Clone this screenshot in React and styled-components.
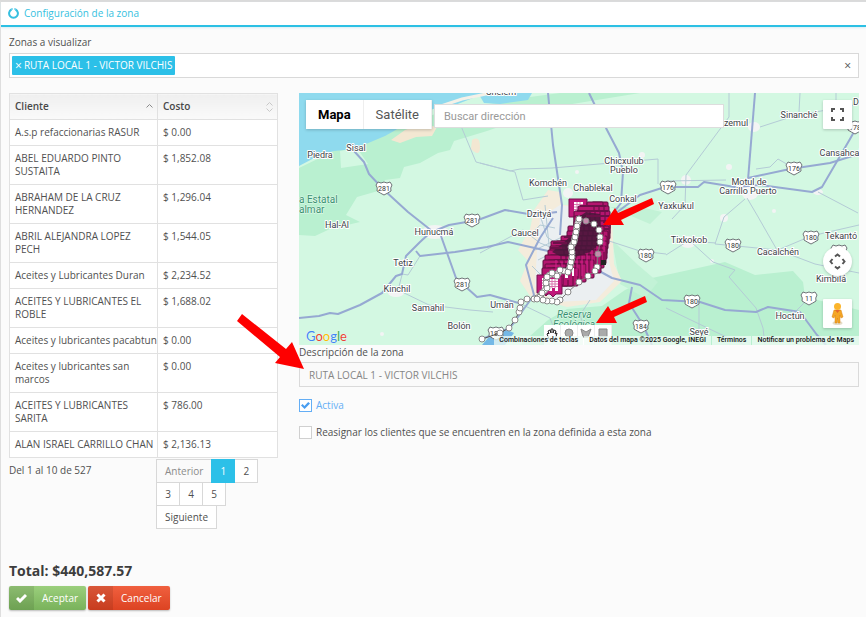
import React, { useState } from "react";
import styled, { createGlobalStyle, css } from "styled-components";

const GlobalStyle = createGlobalStyle`
  *, *::before, *::after { box-sizing: border-box; }
  body {
    margin: 0;
    background: #fbfbfb;
    color: #505050;
    font: 10px/13px "Open Sans", sans-serif;
  }
  button, input { font: inherit; color: inherit; }
`;

const Panel = styled.div`
  border-top: 2px solid #dadada;
  border-left: 1px solid #dedede;
  min-height: 100vh;
`;

const Header = styled.header`
  display: flex;
  align-items: center;
  gap: 5px;
  height: 25px;
  padding: 0 7px;
  background: #fff;
  border-bottom: 2px solid #2cc0e4;
  box-shadow: 0 1px 2px #d8eef4;
  color: #36bfe0;

  h1 { margin: 0; font-size: 10px; font-weight: 400; }
`;

const Body = styled.main`
  padding: 9px 7px 8px 8px;
`;

const Label = styled.label`
  display: block;
`;

const TagBox = styled.div`
  display: flex;
  align-items: center;
  justify-content: space-between;
  height: 25px;
  margin-top: 4px;
  padding: 0 7px 0 2px;
  background: #fff;
  border: 1px solid #d9d9d9;
`;

const Tag = styled.span`
  display: flex;
  align-items: center;
  gap: 2px;
  height: 19px;
  padding: 0 3px;
  border-radius: 1px;
  background: #2cc0e8;
  color: #fff;
`;

const PlainButton = styled.button`
  display: inline-flex;
  align-items: center;
  padding: 0;
  border: 0;
  background: none;
  font-size: 12px;
  cursor: pointer;
`;

const Columns = styled.div`
  display: grid;
  grid-template-columns: 269fr 560fr;
  gap: 21px;
  align-items: start;
  margin-top: 15px;
`;

const Table = styled.table`
  width: 100%;
  table-layout: fixed;
  border-collapse: collapse;
  background: #fff;

  th, td {
    padding: 6px 0 6px 5px;
    border: 1px solid #e1e1e1;
    text-align: left;
    vertical-align: top;
  }
  th {
    background: linear-gradient(#efefef, #fafafa);
    font-weight: 600;
    color: #484848;
  }
  th:first-child { width: 148px; }
`;

const HeadCell = styled.div`
  display: flex;
  align-items: center;
  justify-content: space-between;
  height: 13px;
  margin-right: 4px;
`;

const TableFooter = styled.div`
  display: grid;
  grid-template-columns: 147px 1fr;
  margin-top: 1px;

  p { margin: 5px 0 0; }
`;

const Pager = styled.nav`
  display: flex;
  flex-wrap: wrap;
`;

const PageButton = styled.button`
  height: 24px;
  min-width: 24px;
  margin: 0 -1px -1px 0;
  padding: 0 8px;
  border: 1px solid #d8d8d8;
  background: #fff;
  cursor: pointer;
  &:disabled { color: #8b8b8b; background: #fafafa; }
  ${(p) => p.$active && css`
    background: #2cc0e8;
    border-color: #2cc0e8;
    color: #fff;
    z-index: 1;
  `}
`;

const Total = styled.h2`
  margin: 34px 0 6px;
  font-size: 14px;
  line-height: 18px;
  font-weight: 700;
  color: #3d3d3d;
`;

const Actions = styled.div`
  display: flex;
  gap: 2px;
`;

const ActionButton = styled.button`
  display: flex;
  align-items: center;
  height: 24px;
  padding: 0 8px 0 0;
  gap: 8px;
  border: 0;
  border-radius: 2px;
  overflow: hidden;
  color: #fff;
  background: ${(p) => (p.$danger
    ? "linear-gradient(#f0603f, #dc4322)"
    : "linear-gradient(#9bcf7c, #79b25b)")};
  box-shadow: 0 1px 2px #bbb;
  cursor: pointer;

  span {
    display: grid;
    place-items: center;
    align-self: stretch;
    width: 25px;
    background: #00000018;
  }
`;

const MapFrame = styled.section`
  position: relative;
  height: 252px;
  background: #d3f8e2;
`;

const MapDrawing = styled.svg`
  display: block;
  width: 100%;
  height: 252px;
  font-family: Roboto, sans-serif;
`;

const Overlay = styled.svg`
  position: absolute;
  z-index: 5;
  pointer-events: none;
  overflow: visible;
  top: ${(p) => p.$top}px;
  left: ${(p) => p.$left}px;
`;

const MapTop = styled.div`
  position: absolute;
  inset: 7px 7px auto 7px;
  display: flex;
  align-items: flex-start;
  font-family: Roboto, sans-serif;
`;

const MapType = styled.div`
  display: flex;
  height: 29px;
  background: #fff;
  box-shadow: 0 1px 3px #0003;
`;

const TypeButton = styled.button`
  padding: 0 12px;
  border: 0;
  border-right: 1px solid #eee;
  background: #fff;
  font-size: 13px;
  font-weight: ${(p) => (p.$active ? 700 : 400)};
  color: ${(p) => (p.$active ? "#000" : "#565656")};
`;

const Search = styled.input`
  flex: 0 1 290px;
  min-width: 0;
  height: 24px;
  margin: 4px auto 0 2px;
  padding: 0 9px;
  border: 1px solid #ddd;
  background: #fff;
  font-size: 11px;
  &::placeholder { color: #999; opacity: 1; }
`;

const MapButton = styled.button`
  display: grid;
  place-items: center;
  width: 29px;
  height: 29px;
  padding: 0;
  border: 0;
  border-radius: ${(p) => (p.$round ? "50%" : "1px")};
  background: #fff;
  box-shadow: 0 1px 3px #0003;
`;

const MapSide = styled.div`
  position: absolute;
  right: 7px;
  bottom: 17px;
  display: grid;
  gap: 23px;
`;

const DrawTools = styled.div`
  position: absolute;
  left: 245px;
  bottom: 0;
  display: flex;
  height: 20px;
`;

const Tool = styled.button`
  display: flex;
  justify-content: center;
  align-items: flex-start;
  width: 17px;
  padding: 3px 0 0;
  border: 0;
  border-right: 1px solid #eee;
  background: #fff;
`;

const Attribution = styled.div`
  position: absolute;
  right: 0;
  bottom: 0;
  display: flex;
  gap: 1px;
  font: 500 7px/9px Roboto, sans-serif;
  color: #111;

  > * {
    padding: 0 5px;
    background: #effbf4c0;
    color: inherit;
    text-decoration: none;
    white-space: nowrap;
  }
`;

const LinkButton = styled.button`
  border: 0;
  font: inherit;
`;

const GoogleMark = styled.a`
  position: absolute;
  left: 7px;
  bottom: 0;
  text-decoration: none;
  font: 400 13px/18px Lato, sans-serif;
  text-shadow: 0 0 1px #fff;
`;

const Letter = styled.span`
  color: ${(p) => p.$color};
`;

const Field = styled.div`
  position: relative;
  margin-top: 1px;
`;

const TextInput = styled.input`
  display: block;
  width: 100%;
  height: 25px;
  margin-top: 3px;
  padding: 0 9px;
  border: 1px solid #dadada;
  background: #fafafa;
  color: #858585;
`;

const Check = styled.label`
  display: flex;
  align-items: center;
  gap: 4px;
  margin-top: ${(p) => p.$gap}px;
  color: ${(p) => (p.$on ? "#64aef5" : "inherit")};

  input {
    appearance: none;
    display: grid;
    place-items: center;
    width: 13px;
    height: 13px;
    margin: 0;
    border: 1px solid #d0d0d0;
    background: #fff;
  }
  input:checked { border-color: #64aef5; }
  input:checked::before {
    content: "";
    width: 9px;
    height: 8px;
    background: #4a9ef0;
    clip-path: polygon(0 50%, 18% 32%, 38% 55%, 80% 5%, 100% 25%, 40% 95%);
  }
`;

const clients = [
  ["A.s.p refaccionarias RASUR", "0.00"],
  ["ABEL EDUARDO PINTO SUSTAITA", "1,852.08"],
  ["ABRAHAM DE LA CRUZ HERNANDEZ", "1,296.04"],
  ["ABRIL ALEJANDRA LOPEZ PECH", "1,544.05"],
  ["Aceites y Lubricantes Duran", "2,234.52"],
  ["ACEITES Y LUBRICANTES EL ROBLE", "1,688.02"],
  ["Aceites y lubricantes pacabtun", "0.00"],
  ["Aceites y lubricantes san marcos", "0.00"],
  ["ACEITES Y LUBRICANTES SARITA", "786.00"],
  ["ALAN ISRAEL CARRILLO CHAN", "2,136.13"],
];

const places = [
  [320, 158, "Piedra"], [356, 151, "Sisal"], [337, 228, "Hal-Al"],
  [434, 235, "Hunucmá"], [403, 266, "Tetiz"], [397, 292, "Kinchil"],
  [428, 311, "Samahil"], [459, 329, "Bolón"], [502, 308, "Umán"],
  [525, 236, "Caucel"], [539, 217, "Dzityá"], [548, 186, "Komchén"],
  [593, 191, "Chablekal"], [623, 202, "Conkal"], [624, 164, "Chicxulub"],
  [624, 173, "Pueblo"], [676, 209, "Yaxkukul"], [736, 126, "zemul"],
  [799, 118, "Sinanché"], [749, 185, "Motul de"], [748, 194, "Carrillo Puerto"],
  [842, 156, "Cansahcab"], [856, 105, "D"], [689, 243, "Tixkokob"],
  [778, 255, "Cacalchén"], [841, 239, "Tekantó"], [831, 282, "Kimbilá"],
  [790, 319, "Hoctún"], [699, 335, "Seyé"], [501, 95, "Chelem"],
];

const shields = [
  [384, 188, 281], [472, 220, 281], [462, 284, 281], [668, 187, 176],
  [794, 168, 176], [855, 127, 178], [646, 255, 180], [733, 245, 180],
  [811, 237, 180], [692, 301, 180], [641, 326, 184], [809, 298, 11],
  [839, 251, 80], [496, 333, 180],
];

const highways = [
  "M354 151 L364 162 L369 174 L384 190 L408 212 L432 231 L420 242 L406 256 L402 274 L396 276 L382 293 L360 305 L338 314 L330 313 L319 316 L299 318",
  "M432 232 L449 225 L478 220 L505 210 L534 215 L557 212",
  "M441 236 L456 278 L477 297 L490 295 L522 304",
  "M416 251 L420 256 L455 252 L487 247 L508 242 L548 251",
  "M548 93 L553 145 L562 205 L560 235",
  "M589 93 L606 128 L619 153 L623 172 L621 203 L608 220",
  "M755 93 L748 180",
  "M608 219 L640 195 L665 187 L698 187 L704 182 L735 187 L760 185 L812 192 L822 187 L850 139 L859 123",
  "M748 178 L790 169 L830 163 L859 154",
  "M590 266 L612 278 L640 285 L662 300 L700 302 L725 310 L756 312 L768 307 L800 312 L817 335 L826 345",
  "M632 287 L629 303 L643 325 L652 345",
  "M553 218 L540 238 L526 265 L534 295 L510 328 L482 339",
];

const streets = [
  "M461 126 L476 162 L510 171 L520 169 L552 168 L658 159 L658 184",
  "M480 163 L515 172 L523 200 L548 196",
  "M729 93 L729 117 L686 175 L685 205 L672 219",
  "M760 127 L794 116 L859 104", "M836 93 L836 118",
  "M800 93 L799 112", "M666 181 L726 180",
  "M756 169 L770 167 L778 159 L790 166",
  "M745 199 L724 217 L715 244 L747 247 L777 250 L757 215 L747 198",
  "M818 192 L858 213", "M778 250 L811 236 L859 225",
  "M778 250 L815 264 L859 273",
  "M666 255 L688 241 L716 243", "M690 241 L713 262 L735 270 L729 277 L756 308 L763 328 L765 345",
  "M809 298 L794 313", "M699 302 L699 331",
  "M402 274 L408 275 L420 256", "M402 275 L398 290 L429 305 L470 310 L493 312",
  "M480 253 L523 230 L540 243 L558 250", "M521 304 L550 318 L560 345",
  "M606 240 L640 251 L666 254", "M666 308 L720 334 L745 345",
  "M590 300 L580 315 L590 345", "M530 236 L540 225 L555 228",
  "M540 215 L547 237 L570 252", "M545 205 L550 255 L570 265",
  "M535 250 L560 238", "M538 260 L562 248", "M532 266 L548 282",
];

const route = [
  [482, 339], [500, 333], [509, 328], [515, 320], [519, 312], [520, 308],
  [521, 302], [527, 299], [534, 299], [540, 297], [542, 293], [547, 288],
  [546, 283], [547, 277], [552, 273], [557, 276], [560, 270], [568, 272],
  [570, 267], [571, 262], [572, 257], [572, 252], [571, 247], [574, 242],
  [575, 237], [576, 232], [577, 226], [579, 219],
];

const loop = [
  [579, 219], [586, 221], [594, 224], [599, 230], [600, 237], [600, 242],
  [598, 254], [597, 267], [595, 271], [588, 276], [579, 282],
  [568, 292], [560, 300], [557, 302], [552, 301], [547, 301],
  [543, 300], [537, 299],
];

/* extra vertices halfway along the crowded part of the route */
const between = route.slice(8, -1).map(([x, y], i) => {
  const [nx, ny] = route[i + 9];
  return [(x + nx) / 2, (y + ny) / 2];
});

/* rows of overlapping client markers: y, first x, last x */
const pinRows = [
  [202, 584, 592], [206, 578, 593], [211, 574, 594], [216, 572, 594],
  [221, 570, 594], [226, 568, 593], [231, 564, 592], [236, 557, 591],
  [241, 551, 591], [246, 548, 590], [250, 546, 588], [255, 544, 585],
  [260, 542, 578], [264, 542, 570], [268, 541, 562],
];

const pins = pinRows.flatMap(([y, from, to]) => {
  const row = [];
  for (let x = to; x >= from; x -= 5) row.push([x, y]);
  return row;
});

const Shield = ({ x, y, n }) => (
  <g transform={`translate(${x} ${y})`}>
    <path d="M-6 -6 Q-3 -4 0 -6 Q3 -4 6 -6 L8 -3 Q6 0 7 3 Q4 5 0 7 Q-4 5 -7 3 Q-6 0 -8 -3Z" fill="#fff" stroke="#6f7478" strokeWidth="1" />
    <text y="3" fontSize="7" textAnchor="middle" fill="#333">{n}</text>
  </g>
);

const Pin = ({ x, y }) => (
  <g transform={`translate(${x} ${y})`}>
    <path d="M0 0 H18 V18 H12 L9 21 L6 18 H0Z" fill="#c0177a" stroke="#74104c" strokeWidth="1" />
    <path d="M5 3 H14 V15 H11 V12 H8 V15 H5Z" fill="#fff" />
    <path d="M5 5.500H14M5 8H14M5 10.500H14M8 3V12M11 3V12" stroke="#d977b0" strokeWidth="1" />
  </g>
);

const MapPicture = () => (
  <MapDrawing viewBox="299 93 560 252" preserveAspectRatio="xMinYMin slice" role="img" aria-label="Mapa de la zona">
    <rect x="299" y="93" width="900" height="252" fill="#d3f8e2" />
    <path d="M299 168 L340 148 L390 132 L440 112 L490 104 L530 97 L560 93 L640 93 L560 106 L487 131 L454 141 L450 150 L438 153 L420 163 L404 167 L400 178 L385 180 L378 191 L357 197 L346 215 L360 222 L330 229 L315 236 L299 235Z" fill="#b9f0d0" />
    <path d="M340 151 L357 148 L368 164 L341 168Z" fill="#d3f8e2" />
    <path d="M299 93 H486 L455 105 L433 109 L410 122 L385 136 L354 149 L334 151 L318 156 L299 166Z" fill="#8fdaee" />
    <path d="M478 93 H532 L528 100 L500 104 L484 103Z" fill="#8fdaee" />
    <path d="M438 107 L462 99 L486 94 L505 93" fill="none" stroke="#f4f1e8" strokeWidth="3" />
    <path d="M391 140 L405 130 L421 124 L437 127 L432 136 L416 137 L400 143Z M472 140 Q480 135 480 147 Q480 158 471 149Z" fill="#f3e7d2" />
    <path d="M520 345 L548 320 L567 309 L602 306 L625 290 L652 278 L698 268 L725 262 L755 275 L793 271 L803 282 L805 297 L859 310 V345Z" fill="#b9f0d0" />
    <path d="M610 207 L650 224 L662 212 L640 207Z M612 240 L638 265 L658 282 L645 298 L620 284Z" fill="#c2f2d6" />
    <path d="M534 210 L548 190 L560 192 L563 205 L590 206 L612 215 L614 264 L622 281 L600 302 L567 307 L530 296 L520 281 L528 261 L518 250 L530 229Z" fill="#f4ecdc" />
    <path d="M540 218 L560 205 L590 210 L610 225 L609 262 L614 281 L596 300 L555 302 L535 286 L537 250Z" fill="#ebeff1" />
    <path d="M482 345 L488 338 L505 329 L514 333 L505 345Z" fill="#74b8e6" />
    <g fill="#f3f4f4">
      <ellipse cx="435" cy="232" rx="13" ry="7" /><ellipse cx="396" cy="293" rx="8" ry="4" />
      <ellipse cx="754" cy="127" rx="6" ry="5" /><ellipse cx="750" cy="191" rx="9" ry="9" />
      <ellipse cx="688" cy="242" rx="8" ry="6" /><ellipse cx="818" cy="192" rx="5" ry="3" />
      <circle cx="686" cy="180" r="5" /><circle cx="642" cy="155" r="3" /><circle cx="568" cy="193" r="5" />
      <circle cx="382" cy="334" r="2" /><circle cx="724" cy="218" r="4" /><circle cx="712" cy="261" r="2" />
      <circle cx="729" cy="167" r="3" /><circle cx="774" cy="211" r="2" /><circle cx="577" cy="172" r="2" />
    </g>
    <g fill="none" stroke="#b4cbd6" strokeWidth="1">
      {streets.map((d) => <path key={d} d={d} />)}
    </g>
    <g fill="none" stroke="#96a9d2" strokeWidth="2" strokeLinejoin="round">
      {highways.map((d) => <path key={d} d={d} />)}
    </g>
    {shields.map(([x, y, n]) => <Shield key={`${x}-${y}`} x={x} y={y} n={n} />)}
    <g fontSize="9" fill="#3c4247" stroke="#fff" strokeWidth="2" strokeLinejoin="round" paintOrder="stroke" textAnchor="middle">
      {places.map(([x, y, name]) => <text key={name} x={x} y={y}>{name}</text>)}
    </g>
    <g fontSize="10" fill="#399070" stroke="#e6fbef" strokeWidth="1" paintOrder="stroke">
      <text x="299" y="203">a Estatal</text>
      <text x="299" y="213">almar</text>
      <text x="557" y="318" fontStyle="italic">Reserva</text>
      <text x="553" y="328" fontStyle="italic">Ecológica</text>
    </g>
    <Pin x={569} y={199} />
    <g fill="#b5156f" stroke="#5d0e3f" strokeWidth="1">
      {pins.map(([x, y]) => <rect key={`${x}-${y}`} x={x} y={y} width="16" height="18" rx="1" />)}
    </g>
    <path d="M586 212 L600 214 L601 236 L598 246 L590 252 L575 257 L560 256 L552 252 L562 244 L573 234 L577 218Z" fill="#47183a" opacity=".85" />
    <path d="M580 206H606M577 211H608M586 216H609M603 222H609M604 229H609M564 237H574M553 243H567M550 248H562" stroke="#6b1048" strokeWidth="2" />
    <path d="M562 262V284M568 260V280M577 258V276M582 256V276M587 254V272M592 250V270M597 246V264M556 260V270M604 235V252" stroke="#d0208a" strokeWidth="1" />
    <path d="M565 270h3v8h-3zM572 268h2v8h-2z" fill="#fff" />
    <Pin x={537} y={275} />
    <Pin x={544} y={276} />
    <path d="M601 260h5v5h-5z" fill="#222" />
    <polyline points={route.join(" ")} fill="none" stroke="#555" strokeWidth="1" />
    <polyline points={loop.join(" ")} fill="none" stroke="#777" strokeWidth="1" />
    <g stroke="#8a8a8a" strokeWidth="1">
      {[...between, ...route, ...loop].map(([x, y], i) => (
        <circle key={i} cx={x} cy={y} r="3" fill={(x === 586 || x === 598) ? "#c58aac" : "#fff"} />
      ))}
    </g>
  </MapDrawing>
);

const Arrow = ({ top, left, width, height, d }) => (
  <Overlay $top={top} $left={left} width={width} height={height} aria-hidden="true">
    <path d={d} fill="#fe0000" />
  </Overlay>
);

const brand = [
  ["G", "#4285f4"], ["o", "#ea4335"], ["o", "#fbbc05"],
  ["g", "#4285f4"], ["l", "#34a853"], ["e", "#ea4335"],
];

export default function App() {
  const [page, setPage] = useState(1);
  const [active, setActive] = useState(true);
  const [reassign, setReassign] = useState(false);

  return (
    <>
      <GlobalStyle />
      <Panel>
        <Header>
          <svg width="11" height="11" viewBox="0 0 11 11" fill="none" stroke="currentColor" strokeWidth="2" aria-hidden="true">
            <path d="M3.500 1.500A4.400 4.400 0 1 0 7.500 1.500" />
            <path d="M3 1H5M6 1H8" strokeWidth="1" />
          </svg>
          <h1>Configuración de la zona</h1>
        </Header>
        <Body>
          <Label as="div" id="zones">Zonas a visualizar</Label>
          <TagBox role="group" aria-labelledby="zones">
            <Tag><PlainButton aria-label="Quitar zona">×</PlainButton>RUTA LOCAL 1 - VICTOR VILCHIS</Tag>
            <PlainButton aria-label="Limpiar">×</PlainButton>
          </TagBox>
          <Columns>
            <div>
              <Table>
                <thead>
                  <tr>
                    <th aria-sort="ascending">
                      <HeadCell>Cliente
                        <svg width="7" height="12" viewBox="0 0 7 12" fill="none" stroke="#8a8a8a"><path d="M0.5 6.5L3.5 3.5L6.5 6.5" /></svg>
                      </HeadCell>
                    </th>
                    <th>
                      <HeadCell>Costo
                        <svg width="7" height="12" viewBox="0 0 7 12" fill="none" stroke="#c8c8c8"><path d="M0.5 4.5L3.5 1.5L6.5 4.5M0.5 7.5L3.5 10.5L6.5 7.5" /></svg>
                      </HeadCell>
                    </th>
                  </tr>
                </thead>
                <tbody>
                  {clients.map(([name, cost]) => (
                    <tr key={name}><td>{name}</td><td>$ {cost}</td></tr>
                  ))}
                </tbody>
              </Table>
              <TableFooter>
                <p>Del 1 al 10 de 527</p>
                <Pager aria-label="Páginas">
                  <PageButton disabled={page === 1} onClick={() => setPage(page - 1)}>Anterior</PageButton>
                  {[1, 2, 3, 4, 5].map((n) => (
                    <PageButton key={n} $active={n === page} onClick={() => setPage(n)}>{n}</PageButton>
                  ))}
                  <PageButton disabled={page === 5} onClick={() => setPage(page + 1)}>Siguiente</PageButton>
                </Pager>
              </TableFooter>
              <Total>Total: $440,587.57</Total>
              <Actions>
                <ActionButton>
                  <span><svg width="11" height="10" viewBox="0 0 11 10"><path d="M1 5L4 8L10 2" fill="none" stroke="#fff" strokeWidth="3" /></svg></span>
                  Aceptar
                </ActionButton>
                <ActionButton $danger>
                  <span><svg width="10" height="10" viewBox="0 0 10 10"><path d="M1.5 1.5L8.5 8.5M8.5 1.5L1.5 8.5" stroke="#fff" strokeWidth="3" /></svg></span>
                  Cancelar
                </ActionButton>
              </Actions>
            </div>
            <div>
              <MapFrame>
                <MapPicture />
                <MapTop>
                  <MapType>
                    <TypeButton $active>Mapa</TypeButton>
                    <TypeButton>Satélite</TypeButton>
                  </MapType>
                  <Search aria-label="Buscar dirección" placeholder="Buscar dirección" />
                  <MapButton aria-label="Pantalla completa">
                    <svg width="13" height="13" viewBox="0 0 13 13" fill="none" stroke="#555" strokeWidth="2"><path d="M1 4V1H4M9 1H12V4M12 9V12H9M4 12H1V9" /></svg>
                  </MapButton>
                </MapTop>
                <MapSide>
                  <MapButton $round aria-label="Controles de cámara">
                    <svg width="17" height="17" viewBox="0 0 17 17" fill="none" stroke="#555" strokeWidth="2"><path d="M6 3.5L8.500 1.500L11 3.500M6 13.500L8.500 15.500L11 13.500M3.500 6L1.500 8.500L3.500 11M13.500 6L15.500 8.500L13.500 11" /></svg>
                  </MapButton>
                  <MapButton aria-label="Street View">
                    <svg width="15" height="24" viewBox="0 0 15 24">
                      <ellipse cx="7.5" cy="21" rx="5" ry="2" fill="#e5dcc8" />
                      <path d="M4 8H11L13 15L11 16L10 13V21H8L7.500 16L7 21H5V13L4 16L2 15Z" fill="#f5a623" stroke="#d98314" strokeWidth="0.500" />
                      <circle cx="7.5" cy="4.5" r="3.500" fill="#fbb42b" />
                      <path d="M5 8H10L7.500 11Z" fill="#e5672c" />
                    </svg>
                  </MapButton>
                </MapSide>
                <DrawTools>
                  <Tool aria-label="Mover">
                    <svg width="12" height="12" viewBox="0 0 12 12"><path d="M3 11L1 6L2 5L3 6L2 3L4 2L5 5L5 1H7L7 5L8 2L10 3L9 6L11 5L10 9L9 11Z" fill="#fff" stroke="#222" strokeWidth="1" /></svg>
                  </Tool>
                  <Tool aria-label="Círculo">
                    <svg width="10" height="10" viewBox="0 0 10 10"><circle cx="5" cy="5" r="4" fill="#aaa" stroke="#888" /></svg>
                  </Tool>
                  <Tool aria-label="Polígono">
                    <svg width="12" height="10" viewBox="0 0 12 10"><path d="M1 1L6 4L11 1L8 9L3 9Z" fill="#aaa" stroke="#888" /></svg>
                  </Tool>
                  <Tool aria-label="Rectángulo">
                    <svg width="10" height="10" viewBox="0 0 10 10"><path d="M1 1H9V9H1Z" fill="#aaa" stroke="#888" /></svg>
                  </Tool>
                </DrawTools>
                <GoogleMark href="#google" aria-label="Google">
                  {brand.map(([ch, color], i) => <Letter key={i} $color={color}>{ch}</Letter>)}
                </GoogleMark>
                <Attribution>
                  <LinkButton>Combinaciones de teclas</LinkButton>
                  <span>Datos del mapa ©2025 Google, INEGI</span>
                  <a href="#terminos">Términos</a>
                  <a href="#notificar">Notificar un problema de Maps</a>
                </Attribution>
                <Arrow top={104} left={304} width={52} height={30} d="M49 1L51 7L18 23L21 28L0 28L12 11L15 16Z" />
                <Arrow top={202} left={297} width={52} height={30} d="M49 1L51 7L18 22L21 28L0 28L12 11L15 16Z" />
              </MapFrame>
              <Field>
                <Label htmlFor="description">Descripción de la zona</Label>
                <TextInput id="description" readOnly value="RUTA LOCAL 1 - VICTOR VILCHIS" />
                <Arrow top={-32} left={-62} width={68} height={56} d="M5 0L0 7L43 43L38 49L67 55L55 28L49 35Z" />
              </Field>
              <Check $gap={12} $on={active}>
                <input type="checkbox" checked={active} onChange={(e) => setActive(e.target.checked)} />
                Activa
              </Check>
              <Check $gap={14} $on={reassign}>
                <input type="checkbox" checked={reassign} onChange={(e) => setReassign(e.target.checked)} />
                Reasignar los clientes que se encuentren en la zona definida a esta zona
              </Check>
            </div>
          </Columns>
        </Body>
      </Panel>
    </>
  );
}
